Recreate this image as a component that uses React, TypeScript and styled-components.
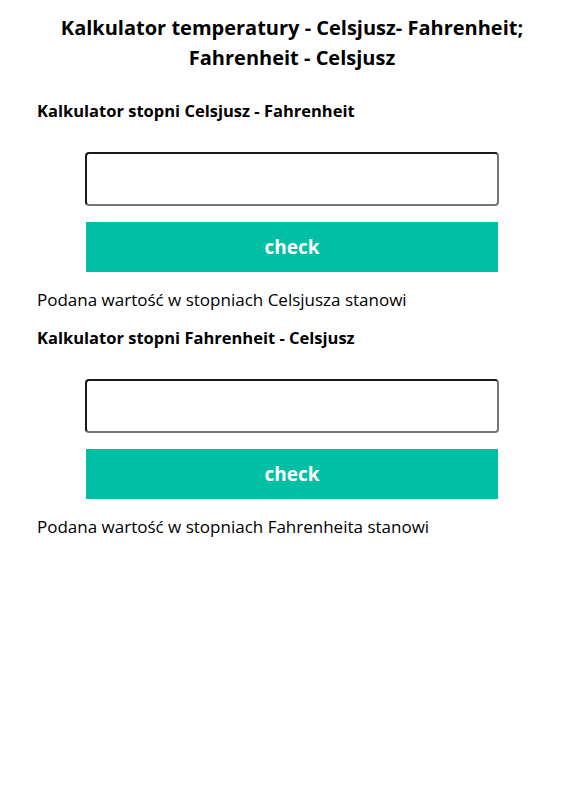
import styled, { createGlobalStyle } from 'styled-components';

const GlobalStyle = createGlobalStyle`
    body {
        margin: 0;
        background: #fff;
        font-family: "Open Sans", "DejaVu Sans", sans-serif;
        color: #000;
    }
`;

const Page = styled.div`
    padding: 13px 39px 40px 37px;
`;

const Title = styled.h1`
    margin: 0 0 27px;
    font-size: 20px;
    line-height: 30px;
    font-weight: 700;
    text-align: center;
`;

const Section = styled.section`
    display: flex;
    flex-direction: column;
    align-items: center;
    margin-bottom: 15px;
`;

const Subtitle = styled.h3`
    align-self: stretch;
    margin: 0;
    font-size: 16.5px;
    line-height: 22px;
    font-weight: 700;
`;

const Input = styled.input`
    box-sizing: border-box;
    width: 414px;
    height: 54px;
    margin-top: 30px;
    border: 2px solid;
    border-color: #1a1a1a #767676 #767676 #1a1a1a;
    border-radius: 4px;
    background: #fff;
    font-size: 18px;
    padding: 0 12px;
`;

const Button = styled.button`
    width: 412px;
    height: 50px;
    margin-top: 16px;
    border: none;
    background-color: #00bfa5;
    color: #fff;
    font-family: inherit;
    font-size: 19px;
    font-weight: 700;
    cursor: pointer;
`;

const Result = styled.p`
    align-self: stretch;
    margin: 16px 0 0;
    font-size: 17px;
    line-height: 24px;
`;

const Calculator = ({ label, result }: { label: string; result: string }) => {
    return (
        <Section>
            <Subtitle>{label}</Subtitle>
            <Input type="text" />
            <Button type="button">check</Button>
            <Result>{result}</Result>
        </Section>
    );
};

const App = () => {
    return (
        <>
            <GlobalStyle />
            <Page>
                <Title>
                    Kalkulator temperatury - Celsjusz- Fahrenheit;
                    <br />
                    Fahrenheit - Celsjusz
                </Title>
                <Calculator
                    label="Kalkulator stopni Celsjusz - Fahrenheit"
                    result="Podana wartość w stopniach Celsjusza stanowi"
                />
                <Calculator
                    label="Kalkulator stopni Fahrenheit - Celsjusz"
                    result="Podana wartość w stopniach Fahrenheita stanowi"
                />
            </Page>
        </>
    );
};

export default App;
